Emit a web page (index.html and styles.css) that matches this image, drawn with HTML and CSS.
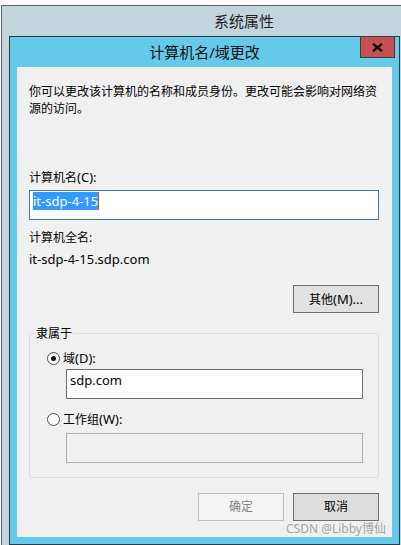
FILE: index.html
```html
<!DOCTYPE html>
<html lang="zh-CN">
<head>
<meta charset="utf-8">
<title>计算机名/域更改</title>
<link rel="stylesheet" href="styles.css">
</head>
<body>
<div class="sys-window">
  <div class="sys-title">系统属性</div>
  <div class="dialog">
    <div class="dlg-title">计算机名/域更改</div>
    <button class="close" aria-label="关闭">
      <svg width="11" height="9" viewBox="0 0 11 9"><path d="M1 0.8 L10 8.2 M10 0.8 L1 8.2" stroke="#111" stroke-width="2.4" fill="none"/></svg>
    </button>
    <div class="dlg-body">
      <p class="intro">你可以更改该计算机的名称和成员身份。更改可能会影响对网络资源的访问。</p>
      <div class="lbl name-lbl">计算机名<span class="lat">(C):</span></div>
      <div class="field focused"><span class="sel lat">it-sdp-4-15</span><span class="caret"></span></div>
      <div class="lbl full-lbl">计算机全名:</div>
      <div class="lbl fqdn"><span class="lat">it-sdp-4-15.sdp.com</span></div>
      <div class="row-right"><button class="btn">其他<span class="lat">(M)...</span></button></div>
      <fieldset class="group">
        <legend>隶属于</legend>
        <div class="radio-row first"><span class="radio checked"></span>域<span class="lat">(D):</span></div>
        <div class="field sub"><span class="lat">sdp.com</span></div>
        <div class="radio-row second"><span class="radio"></span>工作组<span class="lat">(W):</span></div>
        <div class="field sub disabled"></div>
      </fieldset>
      <div class="actions">
        <button class="btn disabled">确定</button>
        <button class="btn cancel">取消</button>
      </div>
    </div>
  </div>
</div>
<div class="watermark">CSDN @Libby博仙</div>
</body>
</html>
```
FILE: styles.css
```css
html, body {
  margin: 0;
  padding: 0;
  width: 401px;
  height: 545px;
  overflow: hidden;
}
body {
  position: relative;
  background: #ffffff;
  font-family: "Noto Sans", "Noto Sans CJK SC", sans-serif;
  font-size: 12px;
  color: #000;
}
.lat {
  font-size: 13px;
}
.sys-window {
  margin: 5px 0 0 1px;
  width: 400px;
  height: 540px;
  box-sizing: border-box;
  background: #c3d5dc;
  border-top: 1px solid #59626a;
  border-left: 1px solid #59626a;
}
.sys-title {
  height: 30px;
  line-height: 30px;
  padding-left: 212px;
  font-size: 15px;
  color: #1e1e1e;
}
.dialog {
  position: relative;
  margin-left: 7px;
  width: 391px;
  box-sizing: border-box;
  border: 1px solid #2d3a41;
  background: #65c9ea;
  padding: 0 7px 7px;
}
.dlg-title {
  height: 30px;
  line-height: 30px;
  text-align: center;
  font-size: 15px;
  color: #111;
}
.close {
  position: absolute;
  top: -1px;
  right: 4px;
  width: 35px;
  height: 22px;
  box-sizing: border-box;
  margin: 0;
  padding: 0;
  border: 1px solid #3b3b3b;
  background: #c75050;
  display: flex;
  align-items: center;
  justify-content: center;
}
.dlg-body {
  background: #f0f0f0;
  height: 470px;
  box-sizing: border-box;
  padding: 16px 13px 0 12px;
  display: flex;
  flex-direction: column;
}
.intro {
  margin: 0;
  line-height: 17px;
}
.lbl {
  line-height: 17px;
}
.name-lbl { margin-top: 52px; }
.full-lbl { margin-top: 9px; }
.fqdn { margin-top: 5px; }
.field {
  height: 30px;
  box-sizing: border-box;
  background: #fff;
  border: 1px solid #7a7a7a;
  padding: 1px 3px 0;
  line-height: 18px;
  display: flex;
  align-items: flex-start;
}
.field.focused {
  margin-top: 4px;
  border-color: #3a76a6;
}
.sel {
  background: #3399ff;
  color: #fff;
}
.caret {
  width: 1px;
  height: 18px;
  background: #c06010;
}
.row-right {
  display: flex;
  justify-content: flex-end;
  margin-top: 17px;
}
.btn {
  width: 86px;
  height: 28px;
  box-sizing: border-box;
  margin: 0;
  padding: 0;
  border: 1px solid #707070;
  background: #e1e1e1;
  font-family: "Noto Sans", "Noto Sans CJK SC", sans-serif;
  font-size: 12px;
  color: #000;
  line-height: 26px;
}
.btn.disabled {
  border-color: #bfbfbf;
  background: #f4f4f4;
  color: #838383;
}
.btn.cancel {
  background: #dddddd;
}
.group {
  margin: 12px 0 0;
  padding: 0 15px 14px 17px;
  border: 1px solid #d8dee2;
  border-radius: 3px;
  min-width: 0;
}
.group legend {
  margin-left: -12px;
  padding: 0 1px;
  line-height: 17px;
}
.radio-row {
  display: flex;
  align-items: center;
  line-height: 17px;
}
.radio-row.first { margin-top: 8px; }
.radio-row.second { margin-top: 12px; }
.radio {
  width: 13px;
  height: 13px;
  box-sizing: border-box;
  border: 1px solid #4a4a4a;
  border-radius: 50%;
  background: #fff;
  margin-right: 3px;
  display: flex;
  align-items: center;
  justify-content: center;
}
.radio.checked::after {
  content: "";
  width: 5px;
  height: 5px;
  border-radius: 50%;
  background: #111;
}
.field.sub {
  margin-left: 19px;
  width: 297px;
  margin-top: 2px;
  border-color: #6e6e6e;
}
.field.sub.disabled {
  margin-top: 5px;
  background: #f0f0f0;
  border-color: #adadad;
}
.actions {
  display: flex;
  justify-content: flex-end;
  gap: 9px;
  margin-top: 15px;
}
.watermark {
  position: absolute;
  right: 15px;
  bottom: 8px;
  font-family: "Noto Sans", "Noto Sans CJK SC", sans-serif;
  font-size: 12px;
  color: #a3a3a3;
  line-height: 16px;
}
```
